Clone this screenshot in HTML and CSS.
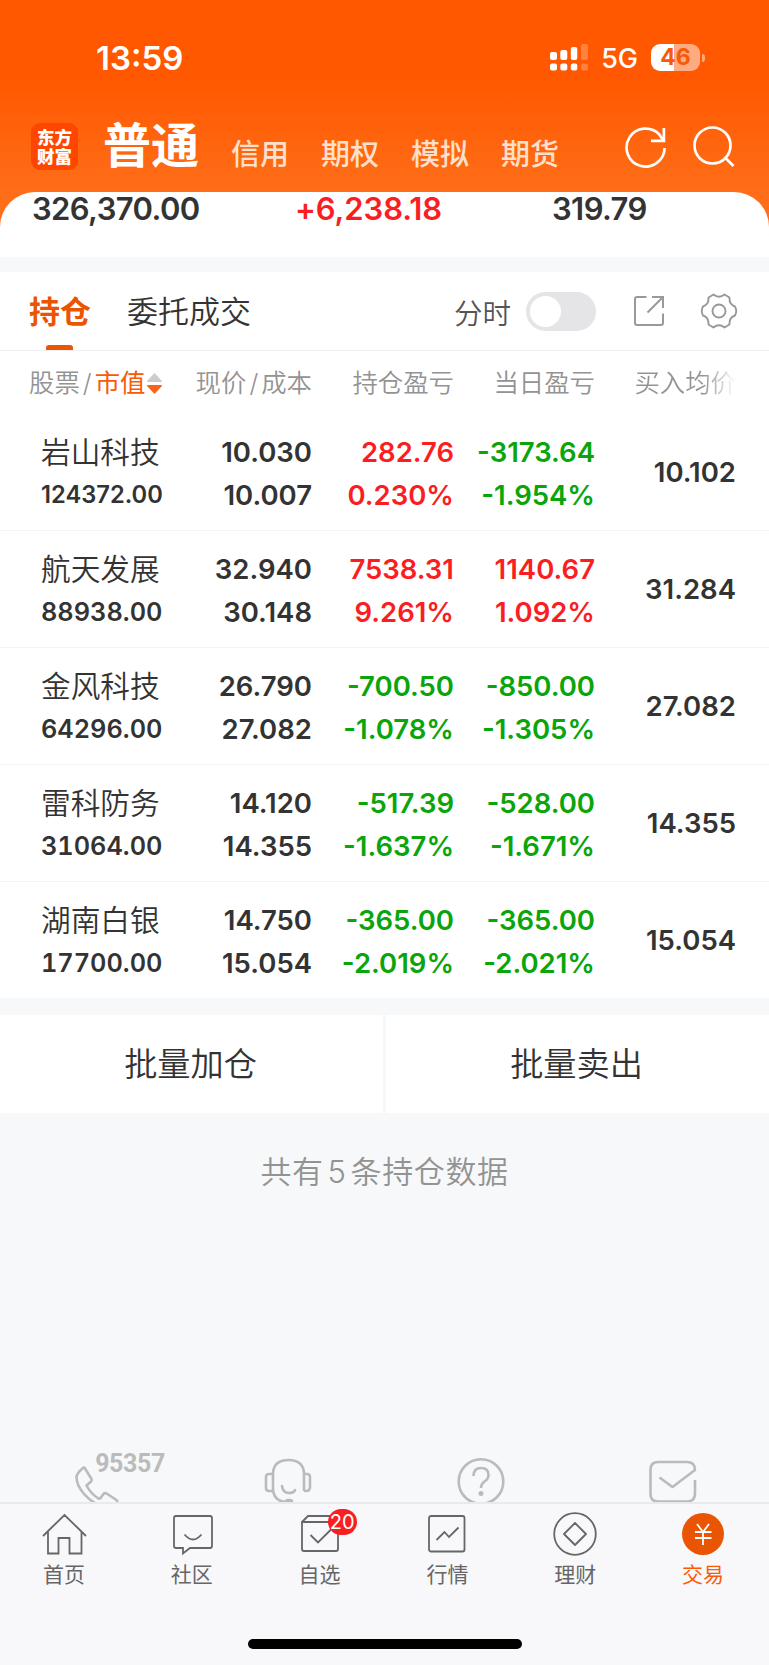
FILE: index.html
```html
<!DOCTYPE html>
<html lang="zh-CN">
<head>
    <meta charset="utf-8">
    <title>交易</title>
    <link rel="stylesheet" href="styles.css">
</head>
<body>
<div class="page">
    <header class="header">
        <div class="status">
            <span class="time">13:59</span>
            <svg class="signal" width="38" height="27" viewBox="0 0 38 27" fill="#fff">
                <rect x="0" y="8" width="7" height="8" rx="2"/>
                <rect x="10.3" y="6" width="7" height="10" rx="2"/>
                <rect x="20.8" y="3" width="6.5" height="13" rx="2"/>
                <rect x="31" y="0" width="7" height="16" rx="2" opacity=".25"/>
                <rect x="0" y="19.5" width="7" height="7" rx="2"/>
                <rect x="10.3" y="19.5" width="7" height="7" rx="2"/>
                <rect x="20.8" y="19.5" width="6.5" height="7" rx="2"/>
                <rect x="31" y="19.5" width="7" height="7" rx="2" opacity=".25"/>
            </svg>
            <span class="net">5G</span>
            <div class="battery">46</div>
            <i class="battery-tip"></i>
        </div>
        <nav class="nav">
            <div class="logo">东方<br>财富</div>
            <a class="current">普通</a>
            <a>信用</a>
            <a>期权</a>
            <a>模拟</a>
            <a>期货</a>
            <svg class="refresh" width="42" height="44" viewBox="0 0 42 44" fill="none" stroke="#fff" stroke-width="2.7">
                <path d="M39.6 23A19 19 0 1 1 34.4 9.5L38 15"/>
                <path d="M38.9 3v12.8H26"/>
            </svg>
            <svg class="search" width="42" height="44" viewBox="0 0 42 44" fill="none" stroke="#fff" stroke-width="2.7">
                <circle cx="19.5" cy="20.5" r="18"/>
                <path d="M31.5 32l9 9"/>
            </svg>
        </nav>
    </header>

    <section class="summary">
        <span>326,370.00</span>
        <span class="red">+6,238.18</span>
        <span>319.79</span>
    </section>

    <section class="holdings">
        <div class="tabs">
            <a class="tab active">持仓</a>
            <a class="tab">委托成交</a>
            <span class="chart-label">分时</span>
            <i class="switch"></i>
            <svg class="share" width="30" height="30" viewBox="0 0 30 30" fill="none" stroke="#999" stroke-width="2">
                <path d="M12.500 1H3Q1 1 1 3V27Q1 29 3 29H27Q29 29 29 27V17.500"/>
                <path d="M18 1H29V12M29 1L13.500 16.500"/>
            </svg>
            <svg class="gear" width="38" height="36" viewBox="0 0 38 36" fill="none" stroke="#999" stroke-width="1.9" stroke-linejoin="round">
                <path d="M13.500 1.500Q19 6 24.500 1.500L29.500 4.500Q29 11.500 35 13.500Q37.500 18 35 22.500Q29 24.500 29.500 31.500L24.500 34.500Q19 30 13.500 34.500L8.500 31.500Q9 24.500 3 22.500Q.5 18 3 13.500Q9 11.500 8.500 4.500Z"/>
                <circle cx="19" cy="18" r="6.500"/>
            </svg>
        </div>

        <div class="row head">
            <div class="sort">股票<b>/</b><em>市值</em>
                <svg width="15" height="21" viewBox="0 0 15 21">
                    <path d="M7.500 0L15 8Q15 9 14 9H1Q0 9 0 8Z" fill="#ccc"/>
                    <path d="M7.500 21L15 13Q15 12 14 12H1Q0 12 0 13Z" fill="#fa6414"/>
                </svg>
            </div>
            <div>现价<b>/</b>成本</div>
            <div>持仓盈亏</div>
            <div>当日盈亏</div>
            <div class="fade">买入均价</div>
        </div>

        <div class="row">
            <div class="stock"><h3>岩山科技</h3><p class="long">124372.00</p></div>
            <div><p>10.030</p><p>10.007</p></div>
            <div class="red"><p>282.76</p><p>0.230%</p></div>
            <div class="green"><p>-3173.64</p><p>-1.954%</p></div>
            <div>10.102</div>
        </div>
        <div class="row">
            <div class="stock"><h3>航天发展</h3><p>88938.00</p></div>
            <div><p>32.940</p><p>30.148</p></div>
            <div class="red"><p>7538.31</p><p>9.261%</p></div>
            <div class="red"><p>1140.67</p><p>1.092%</p></div>
            <div>31.284</div>
        </div>
        <div class="row">
            <div class="stock"><h3>金风科技</h3><p>64296.00</p></div>
            <div><p>26.790</p><p>27.082</p></div>
            <div class="green"><p>-700.50</p><p>-1.078%</p></div>
            <div class="green"><p>-850.00</p><p>-1.305%</p></div>
            <div>27.082</div>
        </div>
        <div class="row">
            <div class="stock"><h3>雷科防务</h3><p>31064.00</p></div>
            <div><p>14.120</p><p>14.355</p></div>
            <div class="green"><p>-517.39</p><p>-1.637%</p></div>
            <div class="green"><p>-528.00</p><p>-1.671%</p></div>
            <div>14.355</div>
        </div>
        <div class="row">
            <div class="stock"><h3>湖南白银</h3><p>17700.00</p></div>
            <div><p>14.750</p><p>15.054</p></div>
            <div class="green"><p>-365.00</p><p>-2.019%</p></div>
            <div class="green"><p>-365.00</p><p>-2.021%</p></div>
            <div>15.054</div>
        </div>
    </section>

    <section class="batch">
        <a>批量加仓</a>
        <a>批量卖出</a>
    </section>

    <p class="count">共有<span>5</span>条持仓数据</p>

    <section class="services">
        <div class="phone">
            <svg width="48" height="48" viewBox="0 0 48 48">
                <path d="M11 11Q5 16 4.500 20C4.500 31 16 44 29 49M11 11Q12 10 13 11.500L19.500 22Q20 23.500 19 24.500L14.500 28.500Q19 37 26.500 41.500Q27.500 42 28.500 41L31.500 37Q33 35.500 34.500 36.500L44.500 43Q46 44 44.500 46" stroke-linejoin="round"/>
            </svg>
            <span>95357</span>
        </div>
        <div>
            <svg width="48" height="48" viewBox="0 0 48 48">
                <path d="M9 34V16Q10 3 24.500 3T40 16V34M9 31Q9 44 22 45"/>
                <path d="M9 17H5Q2 17 2 20V31Q2 34 5 34H9M40 17H43Q46 17 46 20V30Q46 34 42 34H40"/>
                <path d="M18 29Q19 36 24.500 36T31 33" stroke-linecap="round"/>
                <rect x="22" y="43" width="6" height="4" rx="2" fill="#bbb"/>
            </svg>
        </div>
        <div>
            <svg width="48" height="48" viewBox="0 0 48 48">
                <circle cx="24" cy="24.500" r="22.300"/>
                <path d="M16.500 19Q16.500 11 24 11T31.500 18Q31.500 22 27.500 24.500Q24 27 24 31"/>
                <circle cx="24" cy="36.500" r="2.500" fill="#bbb" stroke="none"/>
            </svg>
        </div>
        <div>
            <svg width="48" height="48" viewBox="0 0 48 48">
                <path d="M46 23V36.500Q46 44.500 38 44.500H9Q1.500 44.500 1.500 37V13Q1.500 5 9 5H38Q46 5 46 13L23.500 30L10.500 20.500" stroke-linejoin="round"/>
            </svg>
        </div>
    </section>

    <footer class="tabbar">
        <div class="items">
            <a>
                <svg width="48" height="46" viewBox="0 0 48 46">
                    <path d="M3 24L24.500 3L46 24M8 19.500V41.500H18.500V26H29.500V41.500H41.500V19.500"/>
                </svg>
                首页
            </a>
            <a>
                <svg width="48" height="46" viewBox="0 0 48 46">
                    <path d="M7 4H42Q44 4 44 6V34Q44 36 42 36H22L15 41.500V36H8Q6 36 6 34V6Q6 4 8 4M16.500 22.500Q25 32.500 33.500 22.500"/>
                </svg>
                社区
            </a>
            <a>
                <svg width="48" height="46" viewBox="0 0 48 46">
                    <path d="M6 10V37Q6 39 8 39H40Q42 39 42 37V10ZM6 10L12 4H38L42 10M14.500 23L22 30.500L35 17.500"/>
                </svg>
                自选
                <b class="badge">20</b>
            </a>
            <a>
                <svg width="48" height="46" viewBox="0 0 48 46">
                    <rect x="6" y="4" width="35.500" height="35.500" rx="2"/>
                    <path d="M13.500 28L21.500 20L26 25L35.500 15.500"/>
                </svg>
                行情
            </a>
            <a>
                <svg width="48" height="46" viewBox="0 0 48 46">
                    <circle cx="24" cy="22" r="20.800"/>
                    <path d="M24 11L35 22L24 33L13 22Z" stroke-linejoin="round"/>
                </svg>
                理财
            </a>
            <a class="on">
                <svg width="48" height="46" viewBox="0 0 48 46">
                    <circle cx="24" cy="22" r="21" fill="#ea5504" stroke="none"/>
                    <path d="M18 12L24 20L30 12M16 20H32.500M16 26H32.500M24 20V33" stroke="#fff"/>
                </svg>
                交易
            </a>
        </div>
        <i class="home-bar"></i>
    </footer>
</div>
</body>
</html>
```

FILE: styles.css
```css
* {
    box-sizing: border-box;
}

body {
    margin: 0;
    background: #f7f8fa;
    font-family: Inter, "Noto Sans CJK SC", sans-serif;
    color: #333;
}

h3, p {
    margin: 0;
    font-weight: inherit;
}

.page {
    width: 769px;
    height: 1665px;
    display: flex;
    flex-direction: column;
    overflow: hidden;
}

.red { color: #fa1e23; }
.green { color: #0aa50a; }

/* header */
.header {
    height: 232px;
    flex: none;
    background: linear-gradient(#ff5800 75px, #ff6d18 190px);
    color: #fff;
}

.status {
    height: 115px;
    padding: 0 64px 0 96px;
    display: flex;
    align-items: center;
}

.time {
    flex: 1;
    font-size: 33px;
    font-weight: 600;
}

.net {
    margin: 2px 13px 0 13px;
    font-size: 27px;
    font-weight: 500;
}

.battery {
    width: 49px;
    height: 27px;
    border-radius: 9px;
    background: linear-gradient(90deg, #fff 23px, #ffab80 23px);
    color: #f55a0a;
    font-size: 23px;
    font-weight: 700;
    line-height: 27px;
    text-align: center;
}

.battery-tip {
    width: 3px;
    height: 8px;
    margin-left: 2px;
    border-radius: 0 4px 4px 0;
    background: #ffab80;
}

.nav {
    height: 77px;
    padding-left: 31px;
    display: flex;
    align-items: center;
}

.nav a {
    margin: -3px 0 0 32px;
    font-size: 29px;
    font-weight: 500;
    color: #ffe0cc;
}

.nav .current {
    margin: -24px 0 0 25px;
    font-size: 48px;
    font-weight: 700;
    color: #fff;
}

.logo {
    width: 47px;
    height: 47px;
    margin-top: -14px;
    padding-top: 5px;
    border-radius: 9px;
    background: #ff4600;
    font-size: 17.5px;
    font-weight: 900;
    line-height: 19px;
    text-align: center;
}

.refresh { margin: -14px 0 0 66px; }
.search { margin: -14px 0 0 26px; }

/* summary */
.summary {
    height: 65px;
    flex: none;
    margin-top: -40px;
    padding: 0 32px;
    display: grid;
    grid-template-columns: 263px 257px 1fr;
    border-radius: 35px 35px 0 0;
    background: #fff;
    font-size: 31px;
    font-weight: 600;
    line-height: 34px;
    letter-spacing: -.6px;
}

.summary .red {
    letter-spacing: -.1px;
}

/* holdings */
.holdings {
    margin-top: 15px;
    background: #fff;
}

.tabs {
    height: 79px;
    padding: 0 31px 0 29px;
    display: flex;
    align-items: center;
    border-bottom: 1px solid #f0f1f3;
}

.tab {
    height: 78px;
    margin-right: 36px;
    display: flex;
    flex-direction: column;
    font-size: 31px;
    font-weight: 350;
    line-height: 80px;
}

.active {
    color: #ea5504;
    font-weight: 700;
}

.active::after {
    content: "";
    width: 27px;
    height: 5px;
    flex: none;
    margin: -7px 0 0 17px;
    border-radius: 3px 3px 0 0;
    background: #ea5504;
}

.chart-label {
    margin: 0 15px 0 auto;
    font-size: 28.5px;
    font-weight: 350;
    color: #555;
}

.switch {
    width: 70px;
    height: 39px;
    padding: 4px;
    border-radius: 20px;
    background: #e5e5e8;
}

.switch::before {
    content: "";
    display: block;
    width: 31px;
    height: 31px;
    border-radius: 50%;
    background: #fff;
}

.share { margin-left: 38px; }
.gear { margin-left: 36px; }

.row {
    height: 117px;
    padding: 1px 33px 0 41px;
    display: grid;
    grid-template-columns: 130px 141px 142px 141px 141px;
    align-items: center;
    border-bottom: 1px solid #f3f4f6;
    font-size: 27.5px;
    font-weight: 600;
    line-height: 42.5px;
    text-align: right;
}

.row:last-child {
    height: 116px;
    border-bottom: 0;
}

.row h3,
.row p:first-child {
    padding-top: 2px;
}

.row .stock {
    text-align: left;
    white-space: nowrap;
}

.row .stock h3 {
    font-size: 29.7px;
    font-weight: 350;
}

.stock p {
    font-size: 25.3px;
    font-variant-numeric: tabular-nums;
}

.stock .long {
    font-size: 23.7px;
    font-variant-numeric: normal;
}

.row.head {
    height: 63px;
    padding-top: 1px;
    border: 0;
    font-size: 25.4px;
    font-weight: 350;
    color: #939393;
    white-space: nowrap;
}

.head .sort {
    margin-left: -12px;
    display: flex;
    align-items: center;
}

.head b {
    margin: 0 3px;
    font-weight: 300;
}

.head em {
    font-style: normal;
    font-weight: 400;
    color: #fa5a05;
}

.head svg {
    margin-left: 2px;
}

.fade {
    background: linear-gradient(90deg, #939393 108px, #fff 141px);
    background-clip: text;
    -webkit-background-clip: text;
    color: transparent;
}

/* batch buttons */
.batch {
    height: 98px;
    flex: none;
    margin-top: 17px;
    display: grid;
    grid-template-columns: 1fr 1fr;
    gap: 3px;
}

.batch a {
    background: #fff;
    padding-right: 2px;
    font-size: 33.2px;
    font-weight: 350;
    line-height: 98px;
    text-align: center;
}

.count {
    margin-top: 36px;
    font-size: 31px;
    font-weight: 350;
    line-height: 45px;
    letter-spacing: .6px;
    text-align: center;
    color: #939393;
}

.count span {
    margin: 0 4px;
}

/* service shortcuts, cut off by the tab bar */
.services {
    height: 55px;
    margin-top: auto;
    padding-top: 10px;
    display: grid;
    grid-template-columns: repeat(4, 1fr);
    justify-items: center;
    overflow: hidden;
}

.services div {
    position: relative;
    width: 48px;
}

.services svg {
    fill: none;
    stroke: #bbb;
    stroke-width: 2.6;
}

.phone span {
    position: absolute;
    left: 23px;
    top: -7px;
    font-family: Roboto, sans-serif;
    font-size: 25px;
    font-weight: 700;
    line-height: 28px;
    letter-spacing: -.4px;
    color: #bbb;
}

/* bottom tab bar */
.tabbar {
    height: 163px;
    flex: none;
    border-top: 2px solid #e9eaec;
    background: #f8f8fb;
}

.items {
    height: 135px;
    margin-right: 2px;
    padding-top: 8px;
    display: grid;
    grid-template-columns: repeat(6, 1fr);
}

.items a {
    position: relative;
    display: flex;
    flex-direction: column;
    align-items: center;
    font-size: 21px;
    line-height: 34px;
    color: #666;
}

.items svg {
    fill: none;
    stroke: #666;
    stroke-width: 1.8;
}

.items .on {
    color: #fa5a05;
}

.badge {
    position: absolute;
    left: 72px;
    top: -3px;
    width: 29px;
    height: 26px;
    border-radius: 13px;
    background: #fa1e23;
    color: #fff;
    font-size: 20px;
    font-weight: 400;
    line-height: 26px;
    text-align: center;
}

.home-bar {
    display: block;
    width: 274px;
    height: 10px;
    margin: 0 auto;
    border-radius: 5px;
    background: #000;
}
```
